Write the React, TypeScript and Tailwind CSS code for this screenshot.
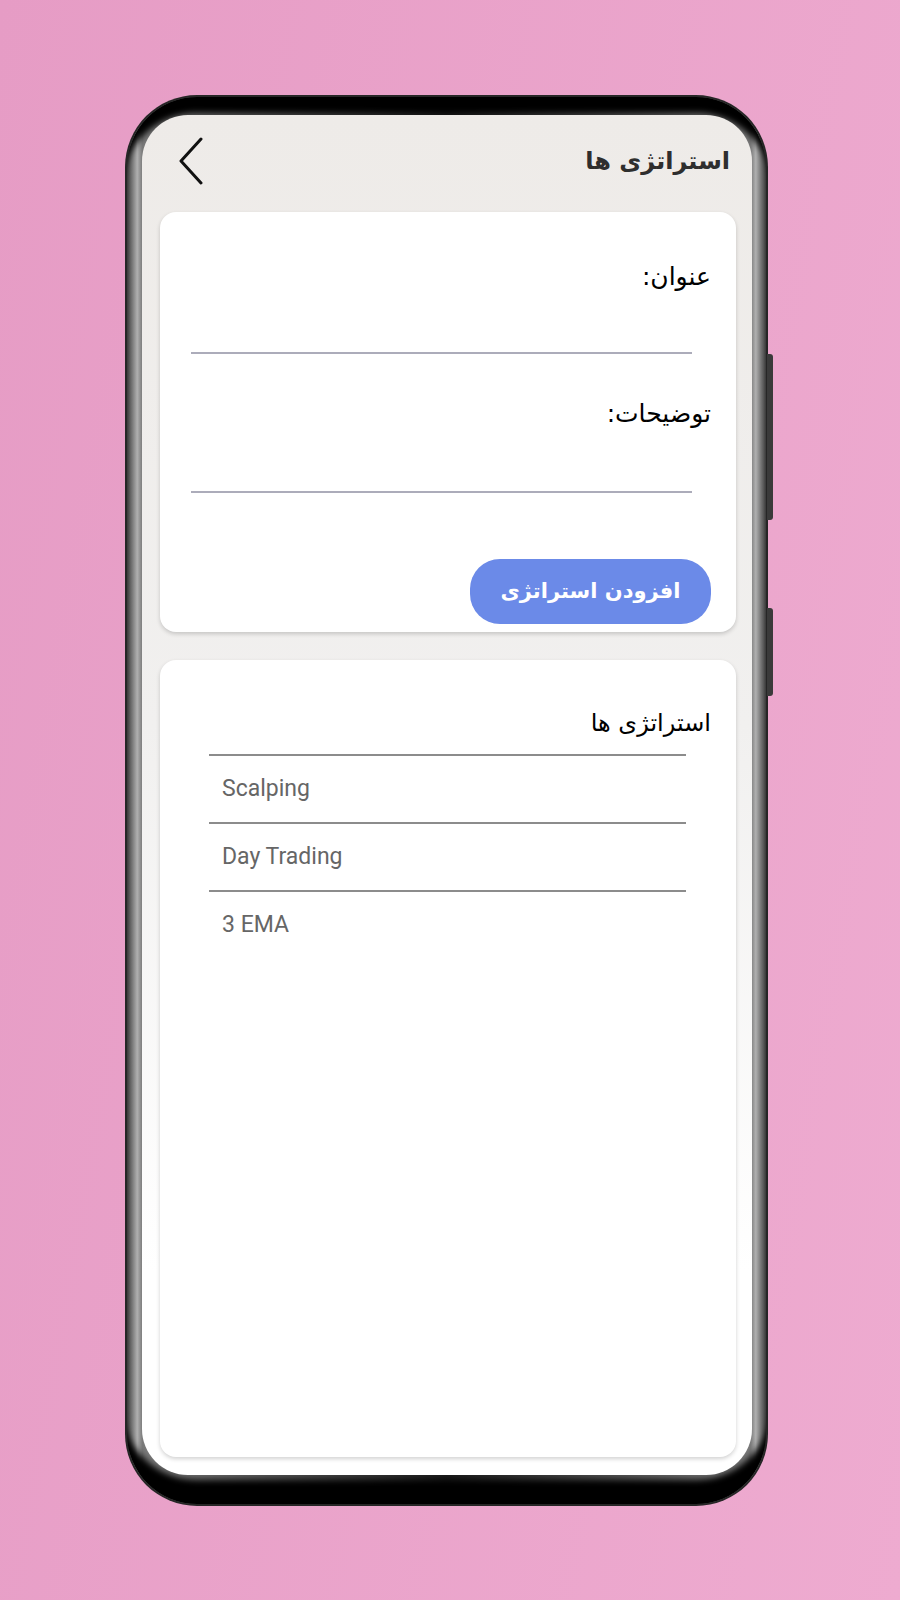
const fa = { fontFamily: '"DejaVu Sans", "Noto Sans", sans-serif' };
const en = { fontFamily: 'Roboto, "Liberation Sans", sans-serif' };

const strategies = ['Scalping', 'Day Trading', '3 EMA'];

function BackIcon() {
  return (
    <svg width="26" height="48" viewBox="0 0 26 48" fill="none">
      <path d="M23 2 L3 24 L23 46" stroke="#111" strokeWidth="3" strokeLinecap="round" strokeLinejoin="round" />
    </svg>
  );
}

function Field({ label, first }: { label: string; first?: boolean }) {
  return (
    <div className={first ? 'pt-[49px]' : 'pt-[44px]'}>
      <div className="pr-[25px] text-[25px] leading-[32px] text-black" style={fa}>
        {label}
      </div>
      <div className={first ? 'ml-[31px] mr-[44px] h-[61px] border-b-2 border-[#acacba]' : 'ml-[31px] mr-[44px] h-[63px] border-b-2 border-[#acacba]'} />
    </div>
  );
}

export default function App() {
  return (
    <div className="min-h-[1600px] w-full bg-[linear-gradient(100deg,#e69cc5,#eeabd0)] pt-[95px]">
      <div className="relative ml-[125px] w-[643px]">
        {/* side buttons */}
        <div className="absolute right-[-5px] top-[259px] h-[166px] w-[6px] rounded-r-[3px] bg-[#3a3a3a]" />
        <div className="absolute right-[-5px] top-[513px] h-[88px] w-[6px] rounded-r-[3px] bg-[#3a3a3a]" />

        <div className="rounded-[72px] bg-[#262626] p-[2px]">
          <div className="rounded-[70px] bg-[linear-gradient(90deg,#3c3c3c,#b0b0b0_1.6%,#7a7a7a_2.4%,#1a1a1a_50%,#7a7a7a_97.6%,#b0b0b0_98.4%,#3c3c3c)] shadow-[inset_0_22px_6px_-6px_#000,inset_0_-30px_6px_-6px_#000] pb-[29px] pl-[15px] pr-[14px] pt-[18px]">
            <div dir="rtl" className="flex h-[1360px] flex-col overflow-hidden rounded-[46px] bg-[linear-gradient(180deg,#eeebe8,#f1f0ef_45%,#ffffff_85%)]">
              {/* header */}
              <div className="flex h-[97px] shrink-0 items-start justify-between pl-[36px] pr-[22px]">
                <h1 className="pt-[26px] text-[24px] font-bold leading-[40px] text-[#2e2e2e]" style={fa}>
                  استراتژی ها
                </h1>
                <div className="pt-[22px]">
                  <BackIcon />
                </div>
              </div>

              {/* form card */}
              <div className="mx-[16px] ml-[18px] flex h-[420px] flex-col rounded-[16px] bg-white shadow-[0_2px_4px_rgba(0,0,0,0.18)]">
                <Field label="عنوان:" first />
                <Field label="توضیحات:" />
                <div className="pr-[25px] pt-[66px]">
                  <button
                    type="button"
                    className="h-[65px] w-[241px] rounded-[30px] bg-[#6b8ae8] text-[21px] font-bold text-white"
                    style={fa}
                  >
                    افزودن استراتژی
                  </button>
                </div>
              </div>

              {/* list card */}
              <div className="mb-[18px] ml-[18px] mr-[16px] mt-[28px] flex-1 rounded-[16px] bg-white shadow-[0_2px_4px_rgba(0,0,0,0.18)]">
                <div className="pr-[25px] pt-[47px] text-[24px] leading-[32px] text-black" style={fa}>
                  استراتژی ها
                </div>
                <ul dir="ltr" className="ml-[49px] mr-[50px] mt-[15px]">
                  {strategies.map((s) => (
                    <li
                      key={s}
                      className="flex h-[68px] items-center border-t-2 border-[#8c8c8c] pl-[13px] text-[23px] text-[#666]"
                      style={en}
                    >
                      {s}
                    </li>
                  ))}
                </ul>
              </div>
            </div>
          </div>
        </div>
      </div>
    </div>
  );
}
